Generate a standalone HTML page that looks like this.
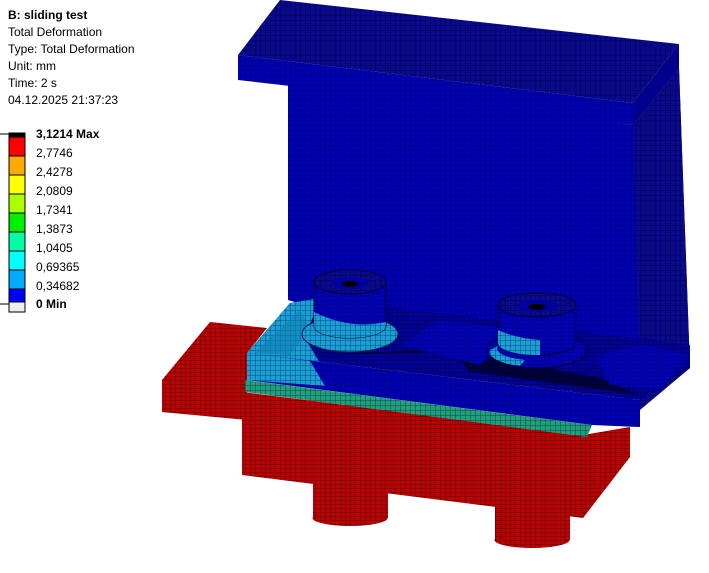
<!DOCTYPE html>
<html><head><meta charset="utf-8"><style>
html,body{margin:0;padding:0;background:#fff;width:709px;height:573px;overflow:hidden;font-family:"Liberation Sans",sans-serif;}
.t{position:absolute;left:8px;font-size:12px;color:#000;line-height:17px;white-space:nowrap}
.l{position:absolute;left:36px;font-size:12px;line-height:14px}
</style></head><body>
<svg width="709" height="573" style="position:absolute;left:0;top:0">
<defs>
<pattern id="mb" width="5" height="5" patternUnits="userSpaceOnUse"><rect width="5" height="5" fill="#0000b8"/><path d="M0 0H5M0 0V5" stroke="#000040" stroke-width="0.8"/></pattern>
<pattern id="mb2" width="4" height="4" patternUnits="userSpaceOnUse"><rect width="4" height="4" fill="#0000c0"/><path d="M0 0H4M0 0V4" stroke="#000040" stroke-width="0.8"/></pattern>
<pattern id="mbd" width="5" height="5" patternUnits="userSpaceOnUse"><rect width="5" height="5" fill="#0a0a90"/><path d="M0 0H5M0 0V5" stroke="#000030" stroke-width="0.8"/></pattern>
<pattern id="mbt" width="4" height="4" patternUnits="userSpaceOnUse"><rect width="4" height="4" fill="#0000a8"/><path d="M0 0H4M0 0V4" stroke="#000020" stroke-width="1"/></pattern>
<pattern id="mr" width="5" height="4" patternUnits="userSpaceOnUse"><rect width="5" height="4" fill="#c00000"/><path d="M0 0H5M0 0V4" stroke="#300000" stroke-width="0.8"/></pattern>
<pattern id="mc" width="5" height="5" patternUnits="userSpaceOnUse"><rect width="5" height="5" fill="#1aa0d8"/><path d="M0 0H5M0 0V5" stroke="#003050" stroke-width="0.8"/></pattern>
<pattern id="mg" width="5" height="5" patternUnits="userSpaceOnUse"><rect width="5" height="5" fill="#20a080"/><path d="M0 0H5M0 0V5" stroke="#003020" stroke-width="0.8"/></pattern>
</defs>
<polygon points="288,82 633,125 679,68 690,368 630,400 288,300" fill="url(#mb)"/>
<polygon points="633,125 679,68 690,368 640,410" fill="url(#mbd)"/>
<polygon points="280,0 679,44 633,103 238,55" fill="url(#mbd)"/>
<polygon points="238,55 633,103 633,125 238,80" fill="url(#mb)"/>
<polygon points="633,103 679,44 679,68 633,125" fill="#00008a"/>
<polygon points="162,380 210,322 267,328 247,353 247,420 162,412" fill="url(#mr)"/>
<rect x="313" y="478" width="75" height="40" fill="url(#mr)"/>
<ellipse cx="350" cy="518" rx="37.5" ry="8" fill="url(#mr)"/>
<rect x="495" y="500" width="75" height="40" fill="url(#mr)"/>
<ellipse cx="532" cy="540" rx="37.5" ry="8" fill="url(#mr)"/>
<polygon points="242,392 583,435 583,518 242,475" fill="url(#mr)"/>
<polygon points="583,435 630,427 630,457 583,518" fill="url(#mr)"/>
<!-- plate top -->
<polygon points="290,303 320,298 690,345 690,368 640,400 247,353" fill="url(#mbt)"/>
<polygon points="320,355 420,350 460,360 470,372 640,395 600,378 460,352" fill="#000018" opacity="0.7"/>
<polygon points="400,345 440,320 520,330 480,365" fill="url(#mb2)"/>
<polygon points="595,355 640,345 690,355 660,390 610,385" fill="url(#mb2)"/>
<polygon points="247,353 290,303 320,298 305,338 330,380 247,378" fill="url(#mc)"/>
<polygon points="255,353 300,310 310,330 290,355" fill="#0f7fb8" opacity="0.6"/>
<!-- plate front -->
<polygon points="247,353 640,400 640,427 592,425 247,380" fill="url(#mb)"/>
<polygon points="247,353 310,361 325,386 247,380" fill="url(#mc)"/>
<polygon points="245,380 592,425 587,437 245,392" fill="url(#mg)"/>
<!-- bolt 1 -->
<ellipse cx="350" cy="334" rx="48" ry="18" fill="url(#mc)" stroke="#002040"/>
<ellipse cx="350" cy="327" rx="38" ry="12" fill="url(#mc)"/>
<path d="M314 282 V326 A36 12 0 0 0 386 326 V282 Z" fill="url(#mb2)" stroke="#000030"/>
<path d="M314 312 V326 A36 12 0 0 0 386 326 V322 Q350 330 314 312 Z" fill="url(#mc)"/>
<ellipse cx="350" cy="282" rx="36" ry="12" fill="url(#mbd)" stroke="#000030"/>
<ellipse cx="350" cy="283" rx="18" ry="6" fill="#0000a0"/>
<ellipse cx="350" cy="284" rx="8" ry="3" fill="#000"/>
<!-- bolt 2 -->
<ellipse cx="537" cy="350" rx="50" ry="18" fill="url(#mb2)" stroke="#000030"/>
<path d="M490 350 A47 15 0 0 0 520 366 L525 360 A40 12 0 0 1 498 346 Z" fill="url(#mc)"/>
<path d="M498 305 V343 A39 12 0 0 0 576 343 V305 Z" fill="url(#mb2)" stroke="#000030"/>
<path d="M498 330 V343 A39 12 0 0 0 540 355 V340 Q515 338 498 330 Z" fill="url(#mc)"/>
<ellipse cx="537" cy="305" rx="39" ry="12" fill="url(#mbd)" stroke="#000030"/>
<ellipse cx="537" cy="306" rx="20" ry="6" fill="#0000a0"/>
<ellipse cx="537" cy="307" rx="9" ry="3" fill="#000"/>
<g stroke="#000" stroke-width="1">
<rect x="9" y="133" width="16" height="4" fill="#000"/>
<rect x="9" y="137" width="16" height="19" fill="#ff0000"/>
<rect x="9" y="156" width="16" height="19" fill="#ffaa00"/>
<rect x="9" y="175" width="16" height="19" fill="#ffff00"/>
<rect x="9" y="194" width="16" height="19" fill="#aaff00"/>
<rect x="9" y="213" width="16" height="19" fill="#00ee00"/>
<rect x="9" y="232" width="16" height="19" fill="#00ffaa"/>
<rect x="9" y="251" width="16" height="19" fill="#00ffff"/>
<rect x="9" y="270" width="16" height="19" fill="#00aaff"/>
<rect x="9" y="289" width="16" height="13" fill="#0000ff"/>
<rect x="9" y="302" width="16" height="10" fill="#eee"/>
</g>
<path d="M0 134H9M0 304H9" stroke="#000"/>
</svg>
<div class="t" style="top:7px;font-weight:bold">B: sliding test</div>
<div class="t" style="top:24px">Total Deformation</div>
<div class="t" style="top:41px">Type: Total Deformation</div>
<div class="t" style="top:58px">Unit: mm</div>
<div class="t" style="top:75px">Time: 2 s</div>
<div class="t" style="top:92px">04.12.2025 21:37:23</div>
<div class="l" style="top:127px;font-weight:bold">3,1214 Max</div>
<div class="l" style="top:146px">2,7746</div>
<div class="l" style="top:165px">2,4278</div>
<div class="l" style="top:184px">2,0809</div>
<div class="l" style="top:203px">1,7341</div>
<div class="l" style="top:222px">1,3873</div>
<div class="l" style="top:241px">1,0405</div>
<div class="l" style="top:260px">0,69365</div>
<div class="l" style="top:279px">0,34682</div>
<div class="l" style="top:297px;font-weight:bold">0 Min</div>
</body></html>
